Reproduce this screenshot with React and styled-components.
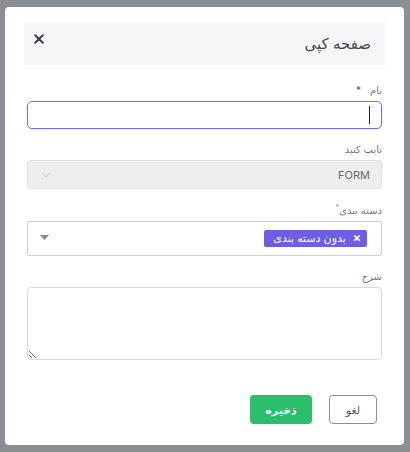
import React from 'react'
import styled, { createGlobalStyle } from 'styled-components'

const GlobalStyle = createGlobalStyle`
   html, body {
      margin: 0;
      padding: 0;
      background: #8b8e92;
   }
   body {
      font-family: Inter, "DejaVu Sans", sans-serif;
   }
   * {
      box-sizing: border-box;
   }
`

const App = () => {
   return (
      <>
         <GlobalStyle />
         <Backdrop>
            <Modal dir="rtl">
               <Header>
                  <Title>صفحه کپی</Title>
                  <CloseButton aria-label="close">
                     <svg width="10" height="10" viewBox="0 0 10 10">
                        <path d="M1.2 1.2 L8.8 8.8 M8.8 1.2 L1.2 8.8" stroke="#3f4248" strokeWidth="2" strokeLinecap="round" />
                     </svg>
                  </CloseButton>
               </Header>

               <Body>
                  <Field>
                     <Label>
                        نام <Star>*</Star>
                     </Label>
                     <InputWrap>
                        <Input type="text" />
                        <Caret />
                     </InputWrap>
                  </Field>

                  <Field>
                     <Label>تایپ کنید</Label>
                     <SelectBox>
                        <SelectValue>FORM</SelectValue>
                        <svg width="10" height="6" viewBox="0 0 10 6">
                           <path d="M1 1 L5 5 L9 1" fill="none" stroke="#d6d6d6" strokeWidth="1.2" />
                        </svg>
                     </SelectBox>
                  </Field>

                  <Field>
                     <Label>
                        دسته بندی<SmallStar>*</SmallStar>
                     </Label>
                     <MultiBox>
                        <Tag>
                           <TagClose>×</TagClose>
                           بدون دسته بندی
                        </Tag>
                        <svg width="9" height="5" viewBox="0 0 9 5">
                           <path d="M0 0 L9 0 L4.5 5 Z" fill="#8a8a8a" />
                        </svg>
                     </MultiBox>
                  </Field>

                  <Field>
                     <Label>شرح</Label>
                     <TextArea />
                  </Field>
               </Body>

               <Footer>
                  <CancelButton>لغو</CancelButton>
                  <SaveButton>ذخیره</SaveButton>
               </Footer>
            </Modal>
         </Backdrop>
      </>
   )
}

const Backdrop = styled.div`
   width: 410px;
   height: 452px;
   padding: 7px 6px 7px 5px;
   background: #8b8e92;
`

const Modal = styled.div`
   width: 399px;
   height: 438px;
   background: #fff;
   border-radius: 4px;
   padding: 15px 19px 0;
   display: flex;
   flex-direction: column;
`

const Header = styled.div`
   height: 43px;
   background: #f6f6f8;
   display: flex;
   align-items: center;
   justify-content: space-between;
   padding: 0 14px 0 9px;
`

const Title = styled.h2`
   margin: 0;
   font-size: 15px;
   font-weight: 400;
   color: #45474d;
`

const CloseButton = styled.button`
   border: none;
   background: none;
   padding: 0;
   margin-top: -10px;
   margin-left: 1px;
   width: 10px;
   height: 10px;
   display: flex;
   cursor: pointer;
`

const Body = styled.div`
   padding: 18px 3px 0;
   display: flex;
   flex-direction: column;
   gap: 13px;
`

const Field = styled.div`
   display: flex;
   flex-direction: column;
   gap: 4px;
`

const Label = styled.label`
   font-size: 10px;
   line-height: 14px;
   color: #777;
   display: flex;
   align-items: center;
`

const Star = styled.span`
   margin-right: 9px;
   font-size: 10px;
   color: #555;
`

const SmallStar = styled.span`
   font-size: 7px;
   color: #999;
   align-self: flex-start;
   margin-top: -2px;
`

const InputWrap = styled.div`
   position: relative;
`

const Input = styled.input`
   width: 100%;
   height: 28px;
   border: 1px solid #7a6fc6;
   border-radius: 5px;
   box-shadow: 0 1px 3px rgba(122, 111, 198, 0.18);
   outline: none;
   padding: 0 12px;
   font-size: 12px;
   background: #fff;
`

const Caret = styled.span`
   position: absolute;
   right: 12px;
   top: 5px;
   width: 1px;
   height: 18px;
   background: #222;
`

const SelectBox = styled.div`
   height: 29px;
   border: 1px solid #e0e0e0;
   border-radius: 4px;
   background: #eeeeee;
   display: flex;
   align-items: center;
   justify-content: space-between;
   padding: 0 11px 0 13px;
   margin-bottom: 1px;
`

const SelectValue = styled.span`
   font-size: 11px;
   color: #6a6a6a;
`

const MultiBox = styled.div`
   height: 35px;
   border: 1px solid #cfcfcf;
   border-radius: 2px;
   background: #fff;
   display: flex;
   align-items: center;
   justify-content: space-between;
   padding: 0 14px 3px 12px;
`

const Tag = styled.span`
   height: 17px;
   background: #6c5fe3;
   color: #fff;
   border-radius: 2px;
   font-size: 11px;
   font-weight: 400;
   display: flex;
   align-items: center;
   gap: 7px;
   padding: 0 6px 0 9px;
   margin-top: 2px;
`

const TagClose = styled.span`
   font-size: 12px;
   font-weight: 700;
   line-height: 1;
`

const TextArea = styled.textarea`
   height: 73px;
   border: 1px solid #d9d9d9;
   border-radius: 4px;
   resize: vertical;
   outline: none;
   font-family: inherit;
`

const Footer = styled.div`
   display: flex;
   gap: 17px;
   padding: 35px 8px 0;
`

const CancelButton = styled.button`
   width: 48px;
   height: 29px;
   border: 1px solid #8e8e8e;
   border-radius: 4px;
   background: #fff;
   color: #555;
   font-family: inherit;
   font-size: 11px;
   cursor: pointer;
`

const SaveButton = styled.button`
   width: 62px;
   height: 29px;
   border: none;
   border-radius: 4px;
   background: #2dbe6c;
   color: #fff;
   font-family: inherit;
   font-size: 11px;
   font-weight: 700;
   cursor: pointer;
`

export default App
